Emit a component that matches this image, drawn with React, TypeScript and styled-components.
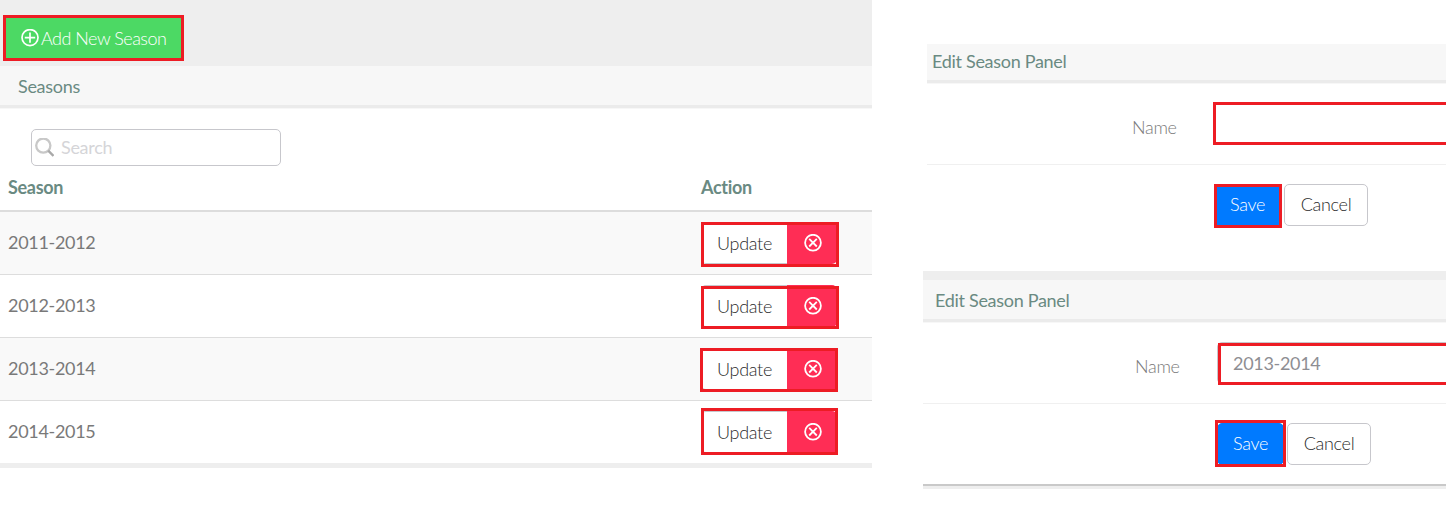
import React from "react";
import styled, { createGlobalStyle } from "styled-components";

const GlobalStyle = createGlobalStyle`
  *, *::before, *::after { box-sizing: border-box; }
  body {
    margin: 0;
    background: #fff;
    color: #797979;
    font-family: Lato, "Liberation Sans", sans-serif;
    font-size: 18px;
    letter-spacing: -0.3px;
    font-variant-ligatures: none;
    overflow: hidden;
  }
  button, input { letter-spacing: inherit; }
`;

const Page = styled.main`
  display: flex;
  height: 513px;
  overflow: hidden;
`;

const SeasonsColumn = styled.section`
  flex: 0 0 872px;
  display: flex;
  flex-direction: column;
`;

const Toolbar = styled.div`
  height: 66px;
  padding: 15px 3px 0;
  background: #eee;
`;

const AddButton = styled.button`
  display: flex;
  align-items: center;
  gap: 2px;
  width: 181px;
  height: 46px;
  padding: 0 0 0 15px;
  border: 3px solid #ed1c24;
  background: #4cd964;
  color: #fff;
  font: 300 18px Lato, sans-serif;
  letter-spacing: -0.5px;
  white-space: nowrap;
`;

const PanelHeader = styled.header<{ $height: number; $indent: number; $lift?: number }>`
  display: flex;
  align-items: center;
  flex: none;
  height: ${(p) => p.$height}px;
  padding-left: ${(p) => p.$indent}px;
  padding-bottom: ${(p) => p.$lift ?? 0}px;
  border-bottom: 3px solid #ebebeb;
  box-shadow: 0 1px 0 #f7f7f7;
  background: #f7f7f7;
  color: #6a8a82;
`;

const SearchBox = styled.label`
  display: flex;
  align-items: center;
  gap: 7px;
  width: 250px;
  height: 37px;
  margin: 21px 0 0 31px;
  padding-left: 2px;
  border: 1px solid #c7c7cc;
  border-radius: 5px;
`;

const SearchInput = styled.input`
  flex: 1;
  min-width: 0;
  padding: 0 0 2px;
  border: 0;
  outline: 0;
  background: none;
  font: 400 18px Lato, sans-serif;
  &::placeholder { color: #d5d5d8; opacity: 1; }
`;

const HeadRow = styled.div`
  display: grid;
  grid-template-columns: 701px 1fr;
  align-items: center;
  height: 46px;
  padding-bottom: 3px;
  border-bottom: 2px solid #ddd;
  color: #6a8a82;
  font-weight: 700;
`;

const HeadCell = styled.div<{ $indent?: number }>`
  padding-left: ${(p) => p.$indent ?? 0}px;
`;

const SeasonRow = styled.div`
  display: grid;
  grid-template-columns: 693px 1fr;
  align-items: center;
  height: 63px;
  padding-left: 8px;
  border-bottom: 1px solid #ddd;
  &:nth-of-type(odd) { background: #f9f9f9; }
  &:last-child { height: 62px; border-bottom: 0; }
`;

const SeasonName = styled.span`
  padding-bottom: 2px;
`;

const TableBody = styled.div`
  border-bottom: 5px solid #eee;
`;

const ButtonGroup = styled.div`
  position: relative;
  display: flex;
  width: 136px;
  height: 42px;
`;

const UpdateButton = styled.button`
  width: 86px;
  padding: 0;
  border: 1px solid #c7c7cc;
  border-right: 0;
  border-radius: 5px 0 0 5px;
  background: #fff;
  color: #2b2b2b;
  font: 300 18px Lato, sans-serif;
`;

const DeleteButton = styled.button`
  display: flex;
  align-items: center;
  flex: 1;
  padding: 0 0 1px 17px;
  border: 0;
  border-radius: 0 5px 5px 0;
  background: #ff2d55;
  color: #fff;
`;

type Frame = { left: number; top: number; width: number; height: number };

const Highlight = styled.span<{ $frame: Frame }>`
  position: absolute;
  left: ${(p) => p.$frame.left}px;
  top: ${(p) => p.$frame.top}px;
  width: ${(p) => p.$frame.width}px;
  height: ${(p) => p.$frame.height}px;
  border: 3px solid #ed1c24;
  pointer-events: none;
`;

const EditColumn = styled.section`
  flex: 1;
  min-width: 0;
  display: flex;
  flex-direction: column;
  padding-left: 51px;
`;

const EditPanel = styled.form<{ $first?: boolean }>`
  margin: ${(p) => (p.$first ? "44px 0 0 4px" : "45px 0 0")};
  height: ${(p) => (p.$first ? "182px" : "218px")};
  border-top: ${(p) => (p.$first ? "0" : "9px solid #eee")};
  border-bottom: ${(p) => (p.$first ? "0" : "3px solid #eee")};
  box-shadow: ${(p) => (p.$first ? "none" : "inset 0 -2px 0 #c9c9c9")};
`;

const FieldRow = styled.div<{ $divided?: boolean; $indent: number; $top: number }>`
  display: flex;
  align-items: flex-start;
  height: 82px;
  padding: ${(p) => p.$top}px 0 0 ${(p) => p.$indent}px;
  border-bottom: ${(p) => (p.$divided ? "1px solid #f0f0f0" : "0")};
`;

const FieldLabel = styled.label`
  width: 82px;
  flex: none;
  line-height: 48px;
  font-weight: 300;
`;

const Control = styled.div<{ $grow?: boolean }>`
  position: relative;
  display: flex;
  height: 42px;
  flex: ${(p) => (p.$grow ? "1 0 0" : "none")};
`;

const NameInput = styled.input`
  width: 300px;
  flex: none;
  height: 42px;
  padding: 0 16px 0 15px;
  border: 1px solid #c7c7cc;
  border-radius: 5px;
  color: #8e8e93;
  outline: 0;
  font: 400 18px Lato, sans-serif;
`;

const FormButton = styled.button<{ $primary?: boolean }>`
  width: ${(p) => (p.$primary ? 67 : 84)}px;
  height: 42px;
  padding: 0 0 2px;
  border: 1px solid ${(p) => (p.$primary ? "#007aff" : "#c7c7cc")};
  border-radius: 5px;
  background: ${(p) => (p.$primary ? "#007aff" : "#fff")};
  color: ${(p) => (p.$primary ? "#fff" : "#2b2b2b")};
  font: 300 18px Lato, sans-serif;
`;

const Actions = styled.div`
  display: flex;
  gap: 3px;
`;

const PlusIcon = () => (
  <svg width="18" height="18" viewBox="0 0 18 18" fill="none" stroke="currentColor" strokeWidth="1.7">
    <circle cx="9" cy="8.6" r="8" />
    <path d="M9 3.4v10.4M3.8 8.6h10.4" />
  </svg>
);

const CloseIcon = () => (
  <svg width="18" height="18" viewBox="0 0 18 18" fill="none" stroke="currentColor" strokeWidth="1.8">
    <circle cx="9" cy="8.7" r="7.9" />
    <path d="M5.2 4.9l7.6 7.6M12.8 4.9l-7.6 7.6" />
  </svg>
);

const SearchIcon = () => (
  <svg width="20" height="20" viewBox="0 0 20 20" fill="none">
    <circle cx="9.3" cy="7.6" r="7.1" stroke="#c8c8c8" strokeWidth="2.3" />
    <path d="M14.2 12.7l5.3 5.3" stroke="#a9a9a9" strokeWidth="2.4" />
  </svg>
);

const seasons: { name: string; frame: Frame }[] = [
  { name: "2011-2012", frame: { left: 0, top: 0, width: 138, height: 45 } },
  { name: "2012-2013", frame: { left: 0, top: 1, width: 138, height: 43 } },
  { name: "2013-2014", frame: { left: -1, top: 0, width: 138, height: 44 } },
  { name: "2014-2015", frame: { left: 0, top: -3, width: 137, height: 47 } },
];

export default function App() {
  return (
    <>
      <GlobalStyle />
      <Page>
        <SeasonsColumn>
          <Toolbar>
            <AddButton type="button">
              <PlusIcon />
              Add New Season
            </AddButton>
          </Toolbar>
          <PanelHeader $height={42} $indent={18}>Seasons</PanelHeader>
          <SearchBox>
            <SearchIcon />
            <SearchInput placeholder="Search" />
          </SearchBox>
          <HeadRow>
            <HeadCell $indent={8}>Season</HeadCell>
            <HeadCell>Action</HeadCell>
          </HeadRow>
          <TableBody>
            {seasons.map((season) => (
              <SeasonRow key={season.name}>
                <SeasonName>{season.name}</SeasonName>
                <ButtonGroup>
                  <UpdateButton type="button">Update</UpdateButton>
                  <DeleteButton type="button" aria-label="Delete">
                    <CloseIcon />
                  </DeleteButton>
                  <Highlight $frame={season.frame} />
                </ButtonGroup>
              </SeasonRow>
            ))}
          </TableBody>
        </SeasonsColumn>

        <EditColumn>
          <EditPanel $first>
            <PanelHeader $height={39} $indent={5} $lift={2}>Edit Season Panel</PanelHeader>
            <FieldRow $divided $indent={205} $top={20}>
              <FieldLabel>Name</FieldLabel>
              <Control $grow>
                <NameInput aria-label="Name" />
                <Highlight $frame={{ left: -1, top: -1, width: 320, height: 43 }} />
              </Control>
            </FieldRow>
            <FieldRow $indent={287} $top={19}>
              <Actions>
                <Control>
                  <FormButton type="button" $primary>Save</FormButton>
                  <Highlight $frame={{ left: 0, top: 0, width: 68, height: 44 }} />
                </Control>
                <FormButton type="button">Cancel</FormButton>
              </Actions>
            </FieldRow>
          </EditPanel>
          <EditPanel>
            <PanelHeader $height={42} $indent={12}>Edit Season Panel</PanelHeader>
            <FieldRow $divided $indent={212} $top={20}>
              <FieldLabel>Name</FieldLabel>
              <Control $grow>
                <NameInput aria-label="Name" defaultValue="2013-2014" />
                <Highlight $frame={{ left: 1, top: 1, width: 320, height: 42 }} />
              </Control>
            </FieldRow>
            <FieldRow $indent={294} $top={19}>
              <Actions>
                <Control>
                  <FormButton type="button" $primary>Save</FormButton>
                  <Highlight $frame={{ left: -2, top: -3, width: 71, height: 47 }} />
                </Control>
                <FormButton type="button">Cancel</FormButton>
              </Actions>
            </FieldRow>
          </EditPanel>
        </EditColumn>
      </Page>
    </>
  );
}
